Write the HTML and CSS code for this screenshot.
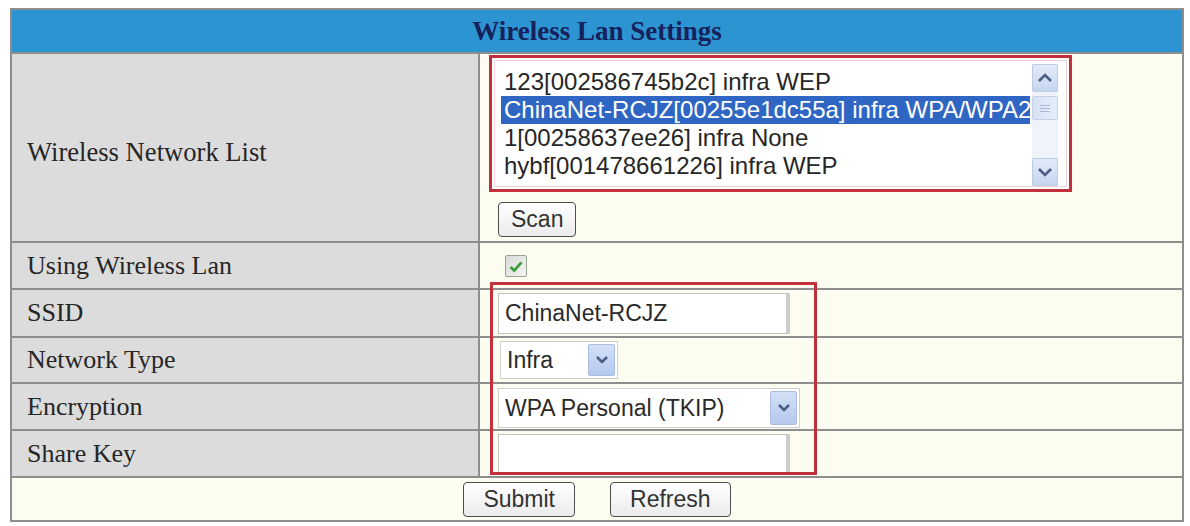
FILE: index.html
```html
<!DOCTYPE html>
<html lang="en">
<head>
<meta charset="utf-8">
<title>Wireless Lan Settings</title>
<link rel="stylesheet" href="styles.css">
</head>
<body>
<form class="settings">
  <div class="title">Wireless Lan Settings</div>

  <div class="label label-list">Wireless Network List</div>
  <div class="value list-cell">
    <div class="list-mark">
      <div class="listbox">
        <div class="options">
          <div class="option">123[002586745b2c] infra WEP</div>
          <div class="option selected">ChinaNet-RCJZ[00255e1dc55a] infra WPA/WPA2</div>
          <div class="option">1[00258637ee26] infra None</div>
          <div class="option">hybf[001478661226] infra WEP</div>
        </div>
        <div class="scrollbar">
          <div class="sb-btn"><svg width="24" height="26" viewBox="0 0 24 26"><polyline points="6,16 12,10 18,16" fill="none" stroke="#4b5d86" stroke-width="2.6"/></svg></div>
          <div class="sb-thumb"><span></span><span></span><span></span></div>
          <div class="sb-track"></div>
          <div class="sb-btn"><svg width="24" height="26" viewBox="0 0 24 26"><polyline points="6,10 12,16 18,10" fill="none" stroke="#4b5d86" stroke-width="2.6"/></svg></div>
        </div>
      </div>
    </div>
    <button type="button" class="btn scan">Scan</button>
  </div>

  <div class="label">Using Wireless Lan</div>
  <div class="value">
    <span class="checkbox" role="checkbox" aria-checked="true">
      <svg width="22" height="22" viewBox="0 0 22 22"><polyline points="5,11 9,15 17,6" fill="none" stroke="#3d9d3b" stroke-width="3"/></svg>
    </span>
  </div>

  <div class="label">SSID</div>
  <div class="value"><input class="text ssid" type="text" value="ChinaNet-RCJZ"></div>

  <div class="label">Network Type</div>
  <div class="value">
    <div class="select infra">
      <select><option>Infra</option><option>Adhoc</option></select>
      <span class="arrow"><svg width="16" height="16" viewBox="0 0 16 16"><polyline points="3,5 8,10 13,5" fill="none" stroke="#4b5d86" stroke-width="2.6"/></svg></span>
    </div>
  </div>

  <div class="label">Encryption</div>
  <div class="value">
    <div class="select enc">
      <select><option>WPA Personal (TKIP)</option><option>None</option><option>WEP</option></select>
      <span class="arrow"><svg width="16" height="16" viewBox="0 0 16 16"><polyline points="3,5 8,10 13,5" fill="none" stroke="#4b5d86" stroke-width="2.6"/></svg></span>
    </div>
  </div>

  <div class="label">Share Key</div>
  <div class="value"><input class="text key" type="password" value=""></div>

  <div class="actions">
    <button type="button" class="btn">Submit</button>
    <button type="button" class="btn">Refresh</button>
  </div>

  <div class="mark-form" aria-hidden="true"></div>
</form>
</body>
</html>
```

FILE: styles.css
```css
* { box-sizing: border-box; }

html, body {
  margin: 0;
  padding: 0;
  background: #ffffff;
}

body {
  padding: 8px 6px 4px 10px;
  font-family: "Liberation Serif", "Times New Roman", serif;
}

.settings {
  position: relative;
  display: grid;
  grid-template-columns: 466px 702px;
  grid-template-rows: 42px 187px 45px 46px 44px 45px 45px 42px;
  gap: 2px;
  width: 1174px;
  margin: 0;
  border: 2px solid #8e8e8e;
  background: #8e8e8e;
}

.title {
  grid-column: 1 / -1;
  display: flex;
  align-items: center;
  justify-content: center;
  background: #2c95d1;
  color: #17215c;
  font-weight: bold;
  font-size: 27px;
}

.label {
  display: flex;
  align-items: center;
  padding-left: 15px;
  background: #dcdcdc;
  color: #262626;
  font-size: 26px;
}

.label-list {
  padding-top: 10px;
  font-size: 26.6px;
}

.value {
  display: flex;
  align-items: center;
  padding-left: 18px;
  background: #fdfcf1;
}

.list-cell {
  flex-direction: column;
  align-items: flex-start;
  justify-content: flex-start;
  padding-top: 1px;
}

.list-mark {
  width: 583px;
  height: 137px;
  margin-left: -9px;
  padding: 2px;
  border: 3px solid #c2303d;
  background: #ffffff;
}

.listbox {
  display: flex;
  height: 100%;
  border: 1px solid #f0d6d8;
  background: #ffffff;
  font-family: "Liberation Sans", Arial, sans-serif;
  font-size: 24px;
  color: #262626;
}

.options {
  flex: 1;
  min-width: 0;
  padding: 7px 2px 0 6px;
}

.option {
  height: 28px;
  line-height: 28px;
  padding: 0 3px;
  white-space: nowrap;
  overflow: hidden;
}

.option.selected {
  background: #2f66c4;
  color: #ffffff;
}

.scrollbar {
  display: flex;
  flex-direction: column;
  width: 26px;
  margin: 3px 8px 0 0;
  background: #f0f3f9;
}

.sb-btn {
  height: 28px;
  display: flex;
  align-items: center;
  justify-content: center;
  border: 1px solid #bccbe6;
  border-radius: 2px;
  background: linear-gradient(#e3ebf8, #c6d5ef);
}

.sb-thumb {
  height: 24px;
  margin-top: 4px;
  display: flex;
  flex-direction: column;
  align-items: center;
  justify-content: center;
  gap: 2px;
  border: 1px solid #c3d0e8;
  border-radius: 2px;
  background: linear-gradient(90deg, #d6e1f4, #e6edf9);
}

.sb-thumb span {
  width: 10px;
  height: 1px;
  background: #a9b9d6;
}

.sb-track {
  flex: 1;
}

.btn {
  height: 35px;
  padding: 0 19px;
  border: 1px solid #4e4e4e;
  border-radius: 4px;
  background: linear-gradient(#ffffff, #ebebeb);
  color: #333333;
  font-family: "Liberation Sans", Arial, sans-serif;
  font-size: 23px;
  line-height: 33px;
}

.scan {
  margin-top: 10px;
  padding: 0 12px;
}

.checkbox {
  display: flex;
  width: 22px;
  height: 22px;
  margin-left: 7px;
  border: 1px solid #97a397;
  border-radius: 2px;
  background: linear-gradient(135deg, #d9dcd9, #f3f4f3);
}

.text {
  height: 41px;
  width: 292px;
  padding: 0 6px;
  border: 1px solid #c4c4c4;
  border-right: 4px solid #cdcdcd;
  background: #ffffff;
  color: #2a2a2a;
  font-family: "Liberation Sans", Arial, sans-serif;
  font-size: 23px;
}

.key { height: 40px; }

.select {
  display: flex;
  align-items: stretch;
  padding: 2px;
  border: 1px solid #cfcfcf;
  background: #ffffff;
}

.select.infra { width: 118px; height: 38px; margin-left: 2px; }
.select.enc { width: 302px; height: 40px; margin-top: 3px; }

.select select {
  flex: 1;
  min-width: 0;
  padding: 0 4px;
  border: 0;
  background: transparent;
  color: #2a2a2a;
  font-family: "Liberation Sans", Arial, sans-serif;
  font-size: 23px;
  -webkit-appearance: none;
  appearance: none;
  outline: none;
}

.arrow {
  width: 27px;
  display: flex;
  align-items: center;
  justify-content: center;
  border: 1px solid #aabde2;
  border-radius: 2px;
  background: linear-gradient(#d3e0f7, #b5c9ee);
}

.actions {
  grid-column: 1 / -1;
  display: flex;
  align-items: center;
  justify-content: center;
  gap: 35px;
  background: #fdfcf1;
}

.mark-form {
  position: absolute;
  left: 478px;
  top: 272px;
  width: 327px;
  height: 193px;
  border: 3px solid #c2303d;
  pointer-events: none;
}
```
